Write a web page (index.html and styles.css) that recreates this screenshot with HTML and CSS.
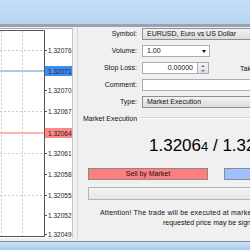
FILE: index.html
```html
<!DOCTYPE html>
<html lang="en">
<head>
    <meta charset="UTF-8">
    <title>Order</title>
    <link rel="stylesheet" href="styles.css">
</head>
<body>
    <div class="titlebar"></div>

    <div class="content">
        <div class="chart">
            <svg width="72" height="209" viewBox="0 0 72 209">
                <!-- grid -->
                <g stroke="#c8c8c8" stroke-dasharray="2 2" stroke-width="1">
                    <line x1="1.5" y1="2" x2="1.5" y2="207"/>
                    <line x1="22.5" y1="2" x2="22.5" y2="207"/>
                    <line x1="0" y1="21.5" x2="44" y2="21.5"/>
                    <line x1="0" y1="82.5" x2="44" y2="82.5"/>
                    <line x1="0" y1="124.5" x2="44" y2="124.5"/>
                    <line x1="0" y1="166.5" x2="44" y2="166.5"/>
                </g>
                <!-- bid / ask -->
                <line x1="0" y1="42" x2="44" y2="42" stroke="#a9c9f2" stroke-width="2"/>
                <line x1="0" y1="104" x2="44" y2="104" stroke="#ffb4b4" stroke-width="2"/>
                <!-- frame -->
                <path d="M-2 1.5 H44.5 V207.5 H-2" fill="none" stroke="#555" stroke-width="1"/>
                <g stroke="#555">
                    <line x1="44" y1="21.5" x2="47" y2="21.5"/>
                    <line x1="44" y1="61.5" x2="47" y2="61.5"/>
                    <line x1="44" y1="82.5" x2="47" y2="82.5"/>
                    <line x1="44" y1="124.5" x2="47" y2="124.5"/>
                    <line x1="44" y1="145.5" x2="47" y2="145.5"/>
                    <line x1="44" y1="166.5" x2="47" y2="166.5"/>
                    <line x1="44" y1="186.5" x2="47" y2="186.5"/>
                    <line x1="44" y1="205.5" x2="47" y2="205.5"/>
                </g>
                <rect x="45" y="37" width="27" height="10" fill="#3d8cf2"/>
                <rect x="45" y="99" width="27" height="10" fill="#ff8686"/>
                <g class="axis">
                    <text x="48" y="24">1.32076</text>
                    <text x="48" y="45" fill="#fff">1.32071</text>
                    <text x="48" y="64">1.32070</text>
                    <text x="48" y="85">1.32067</text>
                    <text x="48" y="107" fill="#fff">1.32064</text>
                    <text x="48" y="127">1.32061</text>
                    <text x="48" y="148">1.32058</text>
                    <text x="48" y="169">1.32055</text>
                    <text x="48" y="189">1.32052</text>
                    <text x="48" y="208">1.32049</text>
                </g>
            </svg>
        </div>

        <div class="dialog">
            <div class="form">
                <label>Symbol:</label>
                <div class="combo grey">EURUSD, Euro vs US Dollar</div>

                <label>Volume:</label>
                <div class="combo small">1.00<span class="arrow"></span></div>

                <label>Stop Loss:</label>
                <div class="row">
                    <div class="field num">0.00000</div>
                    <div class="spin"><span class="up"></span><span class="down"></span></div>
                    <span class="take">Take</span>
                </div>

                <label>Comment:</label>
                <div class="field"></div>

                <label>Type:</label>
                <div class="combo grey">Market Execution</div>
            </div>

            <div class="group">
                <span>Market Execution</span>
                <div class="rule"></div>
            </div>

            <div class="exec">
                <div class="price">1.3206<small>4</small> / 1.32067</div>
                <div class="buttons">
                    <div class="btn sell">Sell by Market</div>
                    <div class="btn buy">Buy by Market</div>
                </div>
                <div class="bar"></div>
                <p class="attention">
                    <span class="line1">Attention! The trade will be executed at market price, difference with</span>
                    <span class="line2">requested price may be significant!</span>
                </p>
            </div>
        </div>
    </div>

    <div class="taskbar"></div>
</body>
</html>
```

FILE: styles.css
```css
body {
    margin: 0;
    width: 250px;
    height: 250px;
    overflow: hidden;
    background: #f0f0f0;
    font-family: "Liberation Sans", Arial, sans-serif;
    font-size: 7px;
    color: #111;
}

.titlebar {
    height: 24px;
    background: linear-gradient(#c6def6, #b7d4f2);
    border-bottom: 3px solid #9aa3ad;
}

.content {
    display: flex;
    height: 214px;
}

.chart {
    width: 72px;
    margin-top: 1px;
    height: 209px;
    background: #fff;
    border-top: 1px solid #a8a8a8;
    border-right: 1px solid #c8c8c8;
}
.chart svg {
    display: block;
}
.axis text {
    font-family: "Liberation Sans", Arial, sans-serif;
    font-size: 6.5px;
    fill: #222;
}

.dialog {
    flex: 1;
    margin-left: 4px;
    border-left: 1px solid #dadada;
    min-width: 0;
}

.form {
    display: grid;
    grid-template-columns: 59px 1fr;
    column-gap: 5px;
    row-gap: 5px;
    padding-top: 1px;
}
.form label {
    text-align: right;
    line-height: 12px;
}

.field, .combo {
    height: 10px;
    line-height: 10px;
    border: 1px solid #abadb3;
    background: #fff;
    padding: 0 4px;
    white-space: nowrap;
    position: relative;
}
.combo.grey {
    background: linear-gradient(#f2f2f2, #dcdcdc);
    border-color: #8e8f8f;
    margin-right: -20px;
}
.combo.small {
    width: 58px;
}
.arrow {
    position: absolute;
    right: 3px;
    top: 4px;
    border-left: 2.5px solid transparent;
    border-right: 2.5px solid transparent;
    border-top: 3px solid #111;
}

.row {
    display: flex;
    align-items: center;
}
.field.num {
    width: 46px;
    text-align: right;
}
.spin {
    width: 10px;
    height: 10px;
    border: 1px solid #abadb3;
    border-left: none;
    background: linear-gradient(#f4f4f4, #e0e0e0);
    display: flex;
    flex-direction: column;
    align-items: center;
    justify-content: space-around;
}
.spin .up {
    border-left: 2px solid transparent;
    border-right: 2px solid transparent;
    border-bottom: 2px solid #6a7a8a;
}
.spin .down {
    border-left: 2px solid transparent;
    border-right: 2px solid transparent;
    border-top: 2px solid #6a7a8a;
}
.take {
    margin-left: 31px;
}
.form > .field {
    margin-right: -20px;
}

.group {
    display: flex;
    align-items: center;
    margin-top: 5px;
    padding-left: 5px;
    height: 10px;
}
.group .rule {
    flex: 1;
    margin-left: 3px;
    border-top: 1px solid #d5d5d5;
    border-bottom: 1px solid #fff;
}

.exec {
    padding-left: 10px;
}
.price {
    margin-top: 13px;
    padding-left: 61px;
    font-size: 17px;
    line-height: 20px;
    white-space: nowrap;
    color: #000;
}
.price small {
    font-size: 13px;
}

.buttons {
    display: flex;
    gap: 16px;
    margin-top: 11px;
}
.btn {
    height: 10px;
    line-height: 10px;
    border: 1px solid #8a8a8a;
    text-align: center;
    white-space: nowrap;
    flex-shrink: 0;
}
.sell {
    width: 118px;
    background: #ff7f7f;
}
.buy {
    width: 118px;
    background: #9fbfff;
}

.bar {
    height: 11px;
    margin-top: 7px;
    margin-right: -10px;
    border: 1px solid #b5b5b5;
    background: linear-gradient(#f4f4f4, #e6e6e6);
}

.attention {
    margin: 8px 0 0;
    line-height: 10px;
    white-space: nowrap;
}
.attention span {
    display: block;
}
.line1 {
    padding-left: 12px;
    letter-spacing: 0.2px;
}
.line2 {
    padding-left: 75px;
}

.taskbar {
    height: 8px;
    border-top: 1px solid #7f8a96;
    background: linear-gradient(#cfe3f8, #a9c9ee);
}
```
